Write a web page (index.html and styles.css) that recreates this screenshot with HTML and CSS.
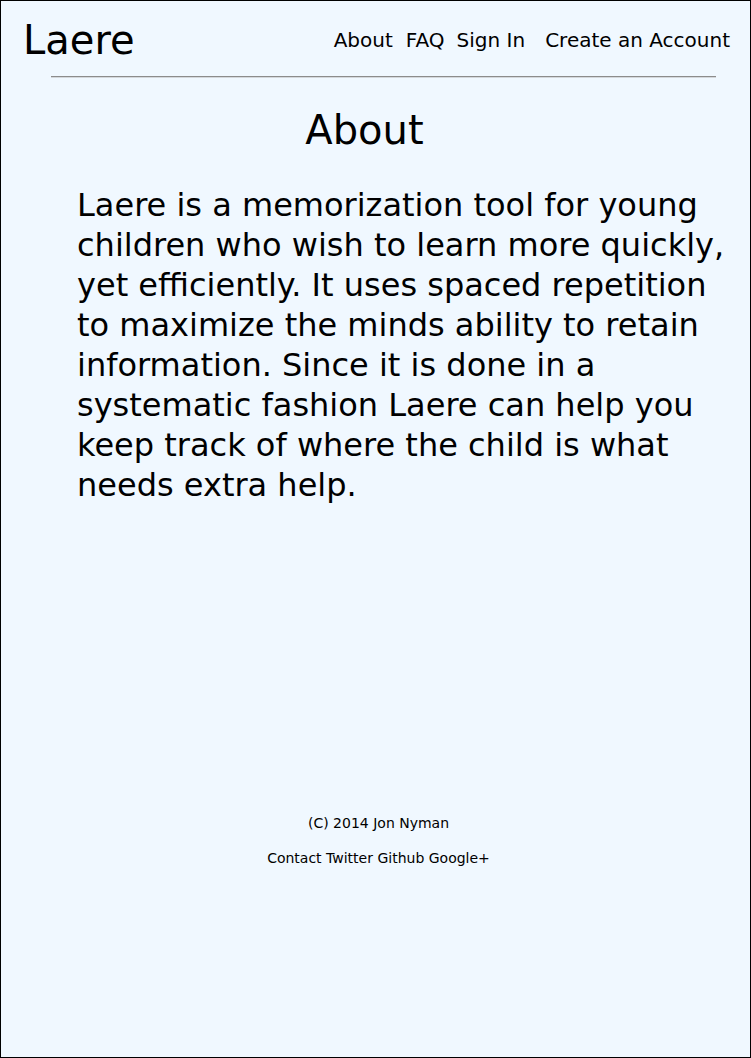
FILE: index.html
```html
<!DOCTYPE html>
<html lang="en">
<head>
<meta charset="utf-8">
<title>Laere - About</title>
<link rel="stylesheet" href="styles.css">
</head>
<body>
<div class="page">
  <header class="site-header">
    <div class="logo">Laere</div>
    <nav class="nav">
      <a class="nav-link nav-about" href="#">About</a>
      <a class="nav-link nav-faq" href="#">FAQ</a>
      <a class="nav-link nav-signin" href="#">Sign In</a>
      <a class="nav-link nav-create" href="#">Create an Account</a>
    </nav>
  </header>
  <hr class="divider">
  <main class="content">
    <h1 class="title">About</h1>
    <p class="intro">Laere is a memorization tool for young children who wish to learn more quickly, yet efficiently. It uses spaced repetition to maximize the minds ability to retain information. Since it is done in a systematic fashion Laere can help you keep track of where the child is what needs extra help.</p>
  </main>
  <footer class="site-footer">
    <p class="copyright">(C) 2014 Jon Nyman</p>
    <p class="links"><a href="#">Contact</a> <a href="#">Twitter</a> <a href="#">Github</a> <a href="#">Google+</a></p>
  </footer>
</div>
</body>
</html>
```
FILE: styles.css
```css
html, body {
  margin: 0;
  padding: 0;
}

body {
  font-family: "DejaVu Sans", sans-serif;
  color: #000;
  background: #f0f8ff;
}

a {
  color: inherit;
  text-decoration: none;
}

.page {
  box-sizing: border-box;
  height: 1058px;
  border: 1px solid #000;
  background: #f0f8ff;
}

.site-header {
  display: flex;
  align-items: center;
  justify-content: space-between;
  padding: 16px 20px 0 22px;
}

.logo {
  font-size: 40px;
  line-height: 46px;
}

.nav {
  display: flex;
  font-size: 20px;
  line-height: 24px;
}

.nav-faq {
  margin-left: 13px;
}

.nav-signin {
  margin-left: 12px;
}

.nav-create {
  margin-left: 20px;
}

.divider {
  margin: 13px 34px 0 50px;
  height: 0;
  border: 0;
  border-top: 1px solid #8c8c8c;
  border-bottom: 1px solid #d4d8dc;
}

.content {
  box-sizing: border-box;
  min-height: 737px;
  padding: 28px 15px 0 76px;
}

.title {
  margin: 0 0 31px 0;
  padding-right: 83px;
  font-size: 40px;
  line-height: 48px;
  font-weight: normal;
  text-align: center;
}

.intro {
  margin: 0;
  font-size: 32px;
  line-height: 40px;
}

.site-footer {
  padding-left: 6px;
  text-align: center;
  font-size: 14px;
  line-height: 17px;
}

.copyright {
  margin: 0 0 18px 0;
}

.links {
  margin: 0;
}
```
